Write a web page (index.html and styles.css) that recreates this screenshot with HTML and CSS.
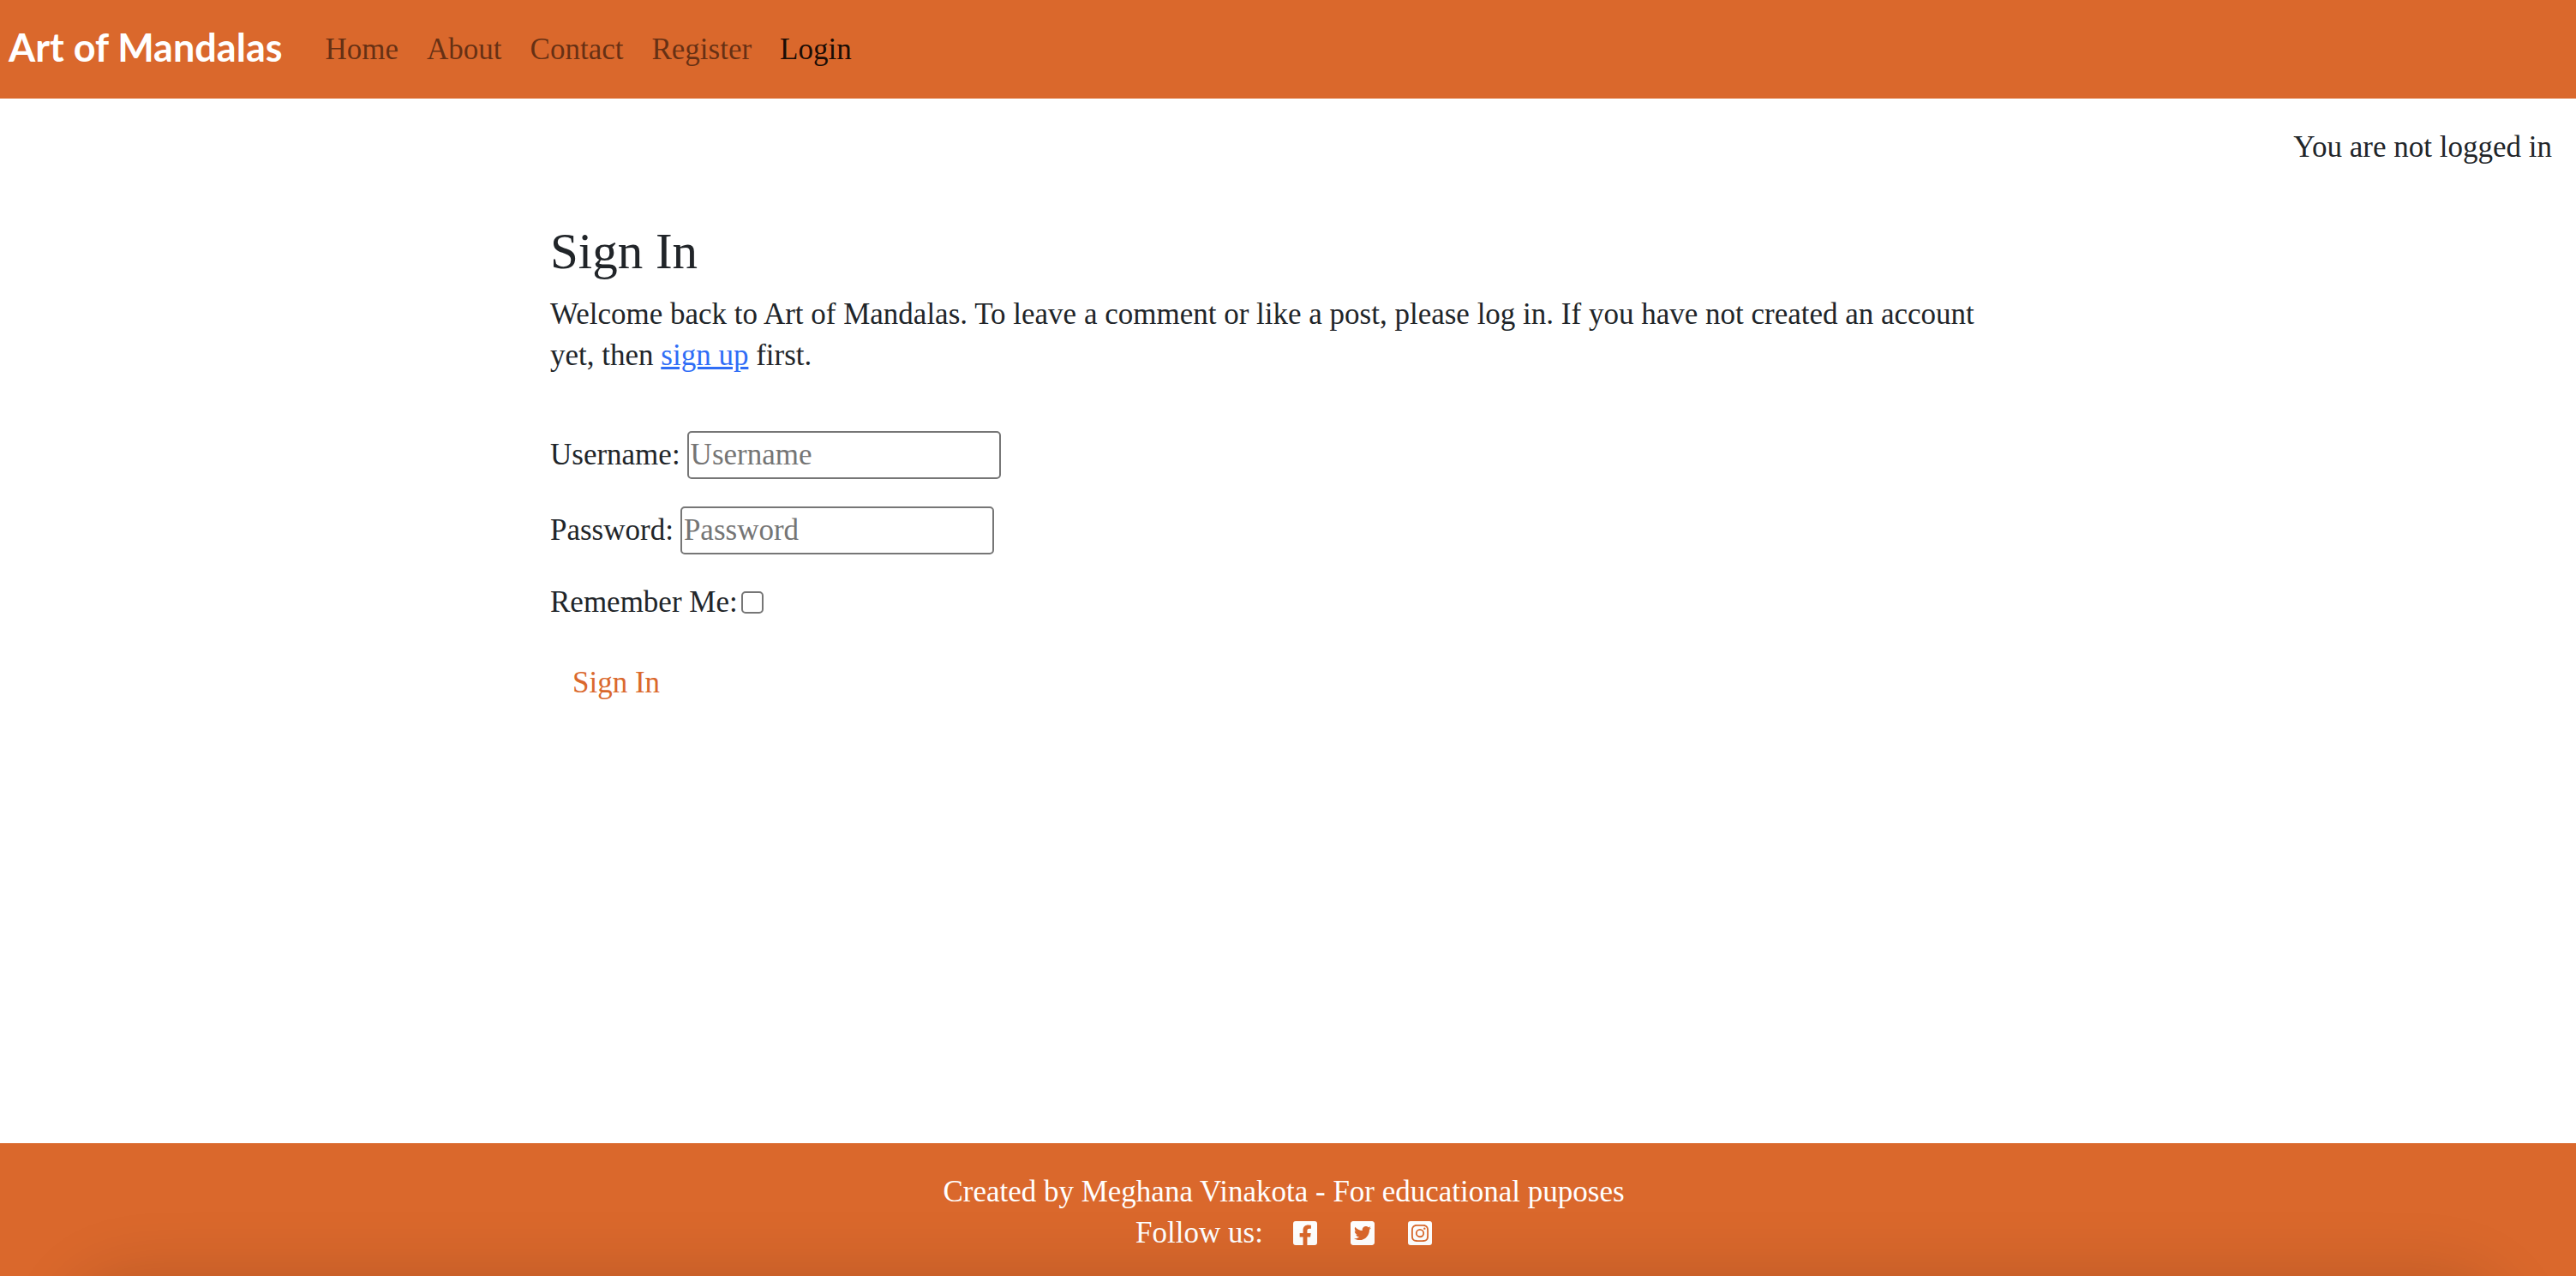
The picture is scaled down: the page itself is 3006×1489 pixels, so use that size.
FILE: index.html
```html
<!DOCTYPE html>
<html lang="en">
<head>
<meta charset="utf-8">
<meta name="viewport" content="width=device-width, initial-scale=1">
<title>Art of Mandalas - Sign In</title>
<link rel="stylesheet" href="styles.css">
</head>
<body>
<header class="navbar">
  <a class="brand" href="#">Art of Mandalas</a>
  <nav class="nav-links">
    <a class="nav-link" href="#">Home</a>
    <a class="nav-link" href="#">About</a>
    <a class="nav-link" href="#">Contact</a>
    <a class="nav-link" href="#">Register</a>
    <a class="nav-link active" href="#" aria-current="page">Login</a>
  </nav>
</header>
<p class="login-status">You are not logged in</p>
<main class="content">
  <div class="column">
    <h1 class="title">Sign In</h1>
    <p class="intro">Welcome back to Art of Mandalas. To leave a comment or like a post, please log in. If you have not created an account yet, then <a class="link" href="#">sign up</a> first.</p>
    <form class="form">
      <div class="field">
        <label for="username">Username:</label>
        <input class="text-input" id="username" type="text" placeholder="Username">
      </div>
      <div class="field">
        <label for="password">Password:</label>
        <input class="text-input" id="password" type="password" placeholder="Password">
      </div>
      <div class="field remember">
        <label for="remember">Remember Me:</label>
        <input class="checkbox" id="remember" type="checkbox">
      </div>
      <button class="submit" type="submit">Sign In</button>
    </form>
  </div>
</main>
<footer class="footer">
  <p class="credit">Created by Meghana Vinakota - For educational puposes</p>
  <div class="social">
    <span class="follow">Follow us:</span>
    <a class="social-link" href="#" aria-label="Facebook"><svg class="icon" viewBox="0 32 448 448" aria-hidden="true"><path d="M400 32H48A48 48 0 0 0 0 80v352a48 48 0 0 0 48 48h137.25V327.69h-63V256h63v-54.64c0-62.15 37-96.48 93.67-96.48 27.14 0 55.52 4.84 55.52 4.84v61h-31.27c-30.81 0-40.42 19.12-40.42 38.73V256h68.78l-11 71.69h-57.78V480H400a48 48 0 0 0 48-48V80a48 48 0 0 0-48-48z"/></svg></a>
    <a class="social-link" href="#" aria-label="Twitter"><svg class="icon" viewBox="0 32 448 448" aria-hidden="true"><path d="M400 32H48C21.5 32 0 53.5 0 80v352c0 26.5 21.5 48 48 48h352c26.5 0 48-21.5 48-48V80c0-26.5-21.5-48-48-48zm-48.9 158.8c.2 2.8.2 5.7.2 8.5 0 86.7-66 186.6-186.6 186.6-37.2 0-71.7-10.8-100.7-29.4 5.3.6 10.4.8 15.8.8 30.7 0 58.9-10.4 81.4-28-28.8-.6-53-19.5-61.3-45.5 10.1 1.5 19.2 1.5 29.6-1.2-30-6.1-52.5-32.5-52.5-64.4v-.8c8.7 4.9 18.9 7.9 29.6 8.3a65.447 65.447 0 0 1-29.2-54.6c0-12.2 3.2-23.4 8.9-33.1 32.3 39.8 80.8 65.8 135.2 68.6-9.3-44.5 24-80.6 64-80.6 18.9 0 35.9 7.9 47.9 20.7 14.8-2.8 29-8.3 41.6-15.8-4.9 15.2-15.2 28-28.8 36.1 13.2-1.4 26-5.1 37.8-10.2-8.9 13.1-20.1 24.7-32.9 34z"/></svg></a>
    <a class="social-link" href="#" aria-label="Instagram"><svg class="icon" viewBox="0 32 448 448" aria-hidden="true"><path d="M224 202.66A53.34 53.34 0 1 0 277.36 256 53.38 53.38 0 0 0 224 202.66zm124.71-41a54 54 0 0 0-30.41-30.41c-21-8.29-71-6.43-94.3-6.43s-73.25-1.93-94.31 6.43a54 54 0 0 0-30.41 30.41c-8.28 21-6.43 71.05-6.43 94.33S91 329.26 99.32 350.33a54 54 0 0 0 30.41 30.41c21 8.29 71 6.43 94.31 6.43s73.24 1.93 94.3-6.43a54 54 0 0 0 30.41-30.41c8.35-21 6.43-71.05 6.43-94.33S357.1 182.74 348.75 161.67zM224 338a82 82 0 1 1 82-82 81.9 81.9 0 0 1-82 82zm85.38-148.3a19.14 19.14 0 1 1 19.13-19.14 19.1 19.1 0 0 1-19.09 19.18zM400 32H48A48 48 0 0 0 0 80v352a48 48 0 0 0 48 48h352a48 48 0 0 0 48-48V80a48 48 0 0 0-48-48zM382.88 322c-1.29 25.63-7.14 48.34-25.85 67s-41.4 24.63-67 25.85c-26.41 1.49-105.59 1.49-132 0-25.63-1.29-48.26-7.15-67-25.85s-24.63-41.42-25.85-67c-1.49-26.42-1.49-105.61 0-132 1.29-25.63 7.07-48.34 25.85-67s41.47-24.56 67-25.78c26.41-1.49 105.59-1.49 132 0 25.63 1.29 48.33 7.15 67 25.85s24.63 41.42 25.85 67.05c1.49 26.32 1.49 105.44 0 131.88z"/></svg></a>
  </div>
</footer>
</body>
</html>
```
FILE: styles.css
```css
:root {
  --orange: #da682c;
  --ink: #212529;
}

* {
  box-sizing: border-box;
}

body {
  margin: 0;
  min-height: 100vh;
  display: flex;
  flex-direction: column;
  background: #fff;
  color: var(--ink);
  font-family: "Liberation Serif", serif;
  font-size: 35px;
  line-height: 48px;
}

.navbar {
  display: flex;
  align-items: center;
  gap: 50px;
  min-height: 115px;
  padding: 0 10px;
  background: var(--orange);
}

.brand {
  padding-bottom: 6px;
  color: #fff;
  font-family: Lato, sans-serif;
  font-size: 45px;
  font-weight: 700;
  text-decoration: none;
}

.nav-links {
  display: flex;
  gap: 33px;
}

.nav-link {
  color: rgba(0, 0, 0, 0.55);
  text-decoration: none;
}

.nav-link.active {
  color: rgba(0, 0, 0, 0.9);
}

.login-status {
  margin: 33px 28px 0 0;
  text-align: right;
}

.content {
  flex: 1;
  padding-right: 10px;
}

.column {
  max-width: 1712px;
  margin: 63px auto 0;
}

.title {
  margin: 0 0 16px;
  font-size: 59px;
  font-weight: 400;
  line-height: 68px;
}

.intro {
  margin: 0 0 64px;
}

.link {
  color: #2f6df6;
  text-decoration-thickness: 3px;
}

.form {
  display: flex;
  flex-direction: column;
  align-items: flex-start;
  gap: 32px;
}

.field {
  display: flex;
  align-items: center;
  gap: 8px;
}

.field.remember {
  gap: 4px;
}

.text-input {
  width: 366px;
  height: 56px;
  padding: 2px;
  border: 2px solid #767676;
  border-radius: 5px;
  background: #fff;
  color: var(--ink);
  font: inherit;
}

.text-input::placeholder {
  color: #757575;
  opacity: 1;
}

.checkbox {
  appearance: none;
  width: 26px;
  height: 26px;
  margin: 0;
  border: 2px solid #767676;
  border-radius: 5px;
  background: #fff;
}

.submit {
  padding: 14px 26px;
  border: 0;
  background: none;
  color: var(--orange);
  font: inherit;
}

.footer {
  position: relative;
  overflow: hidden;
  padding: 33px 10px 26px 0;
  background: var(--orange);
  color: #fff;
  text-align: center;
}

/* soft shade rising from the bottom edge */
.footer::after {
  content: "";
  position: absolute;
  top: 100%;
  left: 80px;
  right: 80px;
  height: 160px;
  border-radius: 80px;
  box-shadow: 0 0 80px rgba(0, 0, 0, 0.15);
  pointer-events: none;
}

.credit {
  margin: 0;
}

.social {
  display: flex;
  justify-content: center;
  align-items: center;
  gap: 39px;
}

.follow {
  margin-right: -4px;
}

.social-link {
  display: flex;
}

.icon {
  width: 28px;
  height: 28px;
  fill: #fff;
}
```
